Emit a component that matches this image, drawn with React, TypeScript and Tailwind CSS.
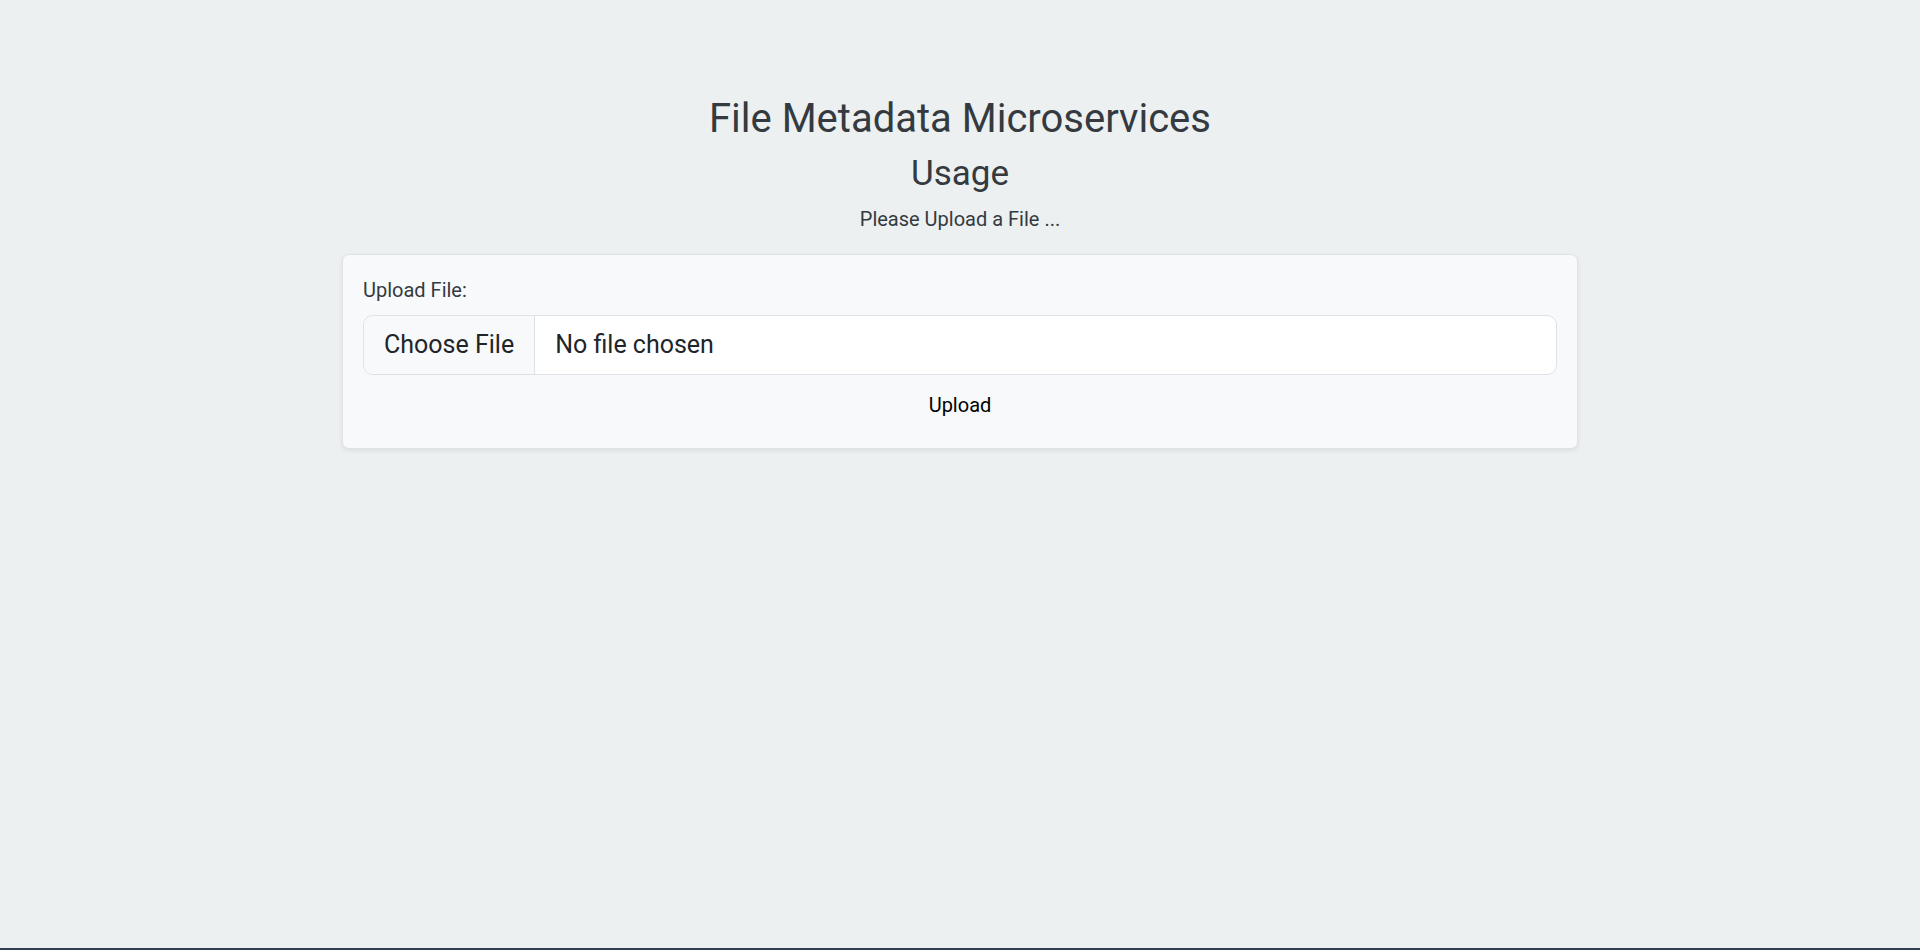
// File metadata upload page: heading, short usage hint and a single upload card.
import { useState } from 'react';

export default function App() {
  const [fileName, setFileName] = useState<string | null>(null);

  return (
    <div className="flex h-[950px] flex-col items-center border-b-2 border-[#2f3e50] bg-[#ecf0f1] font-['Roboto','Liberation_Sans',sans-serif] text-[#343a40]">
      <h1 className="mt-[95px] text-[40px] leading-[48px] font-normal">File Metadata Microservices</h1>
      <h3 className="mt-[10px] text-[35px] leading-[42px] font-normal">Usage</h3>
      <p className="mt-[9px] text-[20px] leading-[30px]">Please Upload a File ...</p>

      <form
        className="mt-[20px] w-[1236px] rounded-[7px] border border-[#dfe3e6] bg-[#f8f9fa] px-5 pt-5 pb-[21px] shadow-[0_2px_4px_rgba(0,0,0,0.07)]"
        onSubmit={(e) => e.preventDefault()}
      >
        <label htmlFor="upfile" className="mb-[10px] block text-[20px] leading-[30px]">
          Upload File:
        </label>
        <label
          htmlFor="upfile"
          className="flex h-[60px] cursor-pointer overflow-hidden rounded-[10px] border border-[#dee2e6] bg-white text-[25px] text-[#212529]"
        >
          <span className="flex items-center border-r border-[#dee2e6] bg-[#f8f9fa] px-5">Choose File</span>
          <span className="flex items-center pl-5">{fileName ?? 'No file chosen'}</span>
          <input
            id="upfile"
            type="file"
            className="hidden"
            onChange={(e) => setFileName(e.target.files?.[0]?.name ?? null)}
          />
        </label>
        <div className="mt-[8px] flex justify-center">
          <button type="submit" className="px-[15px] py-[7px] text-[20px] leading-[30px] text-black">
            Upload
          </button>
        </div>
      </form>
    </div>
  );
}
